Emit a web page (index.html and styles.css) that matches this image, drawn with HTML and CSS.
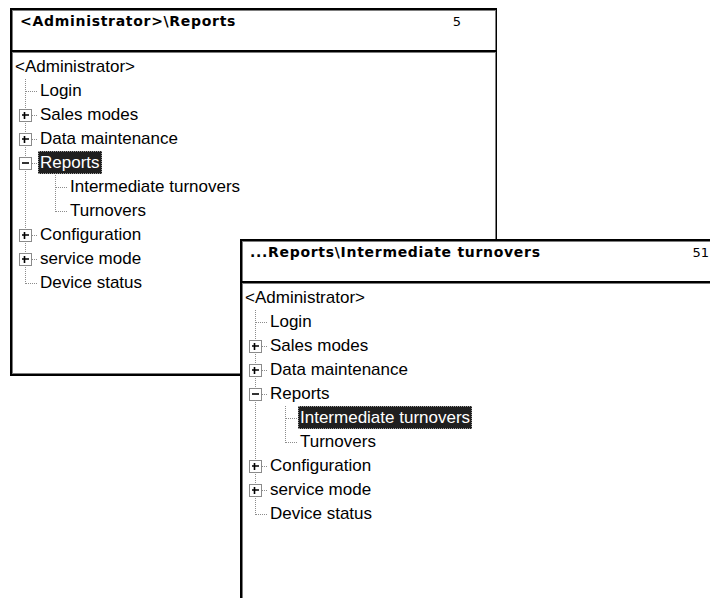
FILE: index.html
```html
<!DOCTYPE html>
<html>
<head>
  <title>Menu tree</title>
  <meta name="viewport" content="width=device-width, initial-scale=1.0">
  <link rel="stylesheet" href="styles.css">
</head>
<body>
  <div class="desktop">

    <!-- back window: Reports selected -->
    <div class="window window-back">
      <div class="title-bar">
        <span class="title">&lt;Administrator&gt;\Reports</span>
        <span class="count">5</span>
      </div>
      <div class="tree">
        <div class="row"><span class="label">&lt;Administrator&gt;</span></div>
        <div class="row"><span class="branch"></span><span class="label">Login</span></div>
        <div class="row">
          <span class="branch"><svg class="toggle" width="13" height="13" viewBox="0 0 13 13"><rect x="0.5" y="0.5" width="12" height="12" fill="#fff" stroke="#8a8a8a"/><path d="M3 6h7M5.5 3v7" stroke="#000" stroke-width="1.6" fill="none"/></svg></span>
          <span class="label">Sales modes</span>
        </div>
        <div class="row">
          <span class="branch"><svg class="toggle" width="13" height="13" viewBox="0 0 13 13"><rect x="0.5" y="0.5" width="12" height="12" fill="#fff" stroke="#8a8a8a"/><path d="M3 6h7M5.5 3v7" stroke="#000" stroke-width="1.6" fill="none"/></svg></span>
          <span class="label">Data maintenance</span>
        </div>
        <div class="row">
          <span class="branch"><svg class="toggle" width="13" height="13" viewBox="0 0 13 13"><rect x="0.5" y="0.5" width="12" height="12" fill="#fff" stroke="#8a8a8a"/><path d="M3 6h7" stroke="#000" stroke-width="1.6" fill="none"/></svg></span>
          <span class="label selected">Reports</span>
        </div>
        <div class="row"><span class="indent"></span><span class="branch"></span><span class="label">Intermediate turnovers</span></div>
        <div class="row"><span class="indent"></span><span class="branch branch-last"></span><span class="label">Turnovers</span></div>
        <div class="row">
          <span class="branch"><svg class="toggle" width="13" height="13" viewBox="0 0 13 13"><rect x="0.5" y="0.5" width="12" height="12" fill="#fff" stroke="#8a8a8a"/><path d="M3 6h7M5.5 3v7" stroke="#000" stroke-width="1.6" fill="none"/></svg></span>
          <span class="label">Configuration</span>
        </div>
        <div class="row">
          <span class="branch"><svg class="toggle" width="13" height="13" viewBox="0 0 13 13"><rect x="0.5" y="0.5" width="12" height="12" fill="#fff" stroke="#8a8a8a"/><path d="M3 6h7M5.5 3v7" stroke="#000" stroke-width="1.6" fill="none"/></svg></span>
          <span class="label">service mode</span>
        </div>
        <div class="row"><span class="branch branch-last"></span><span class="label">Device status</span></div>
      </div>
    </div>

    <!-- front window: Intermediate turnovers selected -->
    <div class="window window-front">
      <div class="title-bar">
        <span class="title">...Reports\Intermediate turnovers</span>
        <span class="count">51</span>
      </div>
      <div class="tree">
        <div class="row"><span class="label">&lt;Administrator&gt;</span></div>
        <div class="row"><span class="branch"></span><span class="label">Login</span></div>
        <div class="row">
          <span class="branch"><svg class="toggle" width="13" height="13" viewBox="0 0 13 13"><rect x="0.5" y="0.5" width="12" height="12" fill="#fff" stroke="#8a8a8a"/><path d="M3 6h7M5.5 3v7" stroke="#000" stroke-width="1.6" fill="none"/></svg></span>
          <span class="label">Sales modes</span>
        </div>
        <div class="row">
          <span class="branch"><svg class="toggle" width="13" height="13" viewBox="0 0 13 13"><rect x="0.5" y="0.5" width="12" height="12" fill="#fff" stroke="#8a8a8a"/><path d="M3 6h7M5.5 3v7" stroke="#000" stroke-width="1.6" fill="none"/></svg></span>
          <span class="label">Data maintenance</span>
        </div>
        <div class="row">
          <span class="branch"><svg class="toggle" width="13" height="13" viewBox="0 0 13 13"><rect x="0.5" y="0.5" width="12" height="12" fill="#fff" stroke="#8a8a8a"/><path d="M3 6h7" stroke="#000" stroke-width="1.6" fill="none"/></svg></span>
          <span class="label">Reports</span>
        </div>
        <div class="row"><span class="indent"></span><span class="branch"></span><span class="label selected">Intermediate turnovers</span></div>
        <div class="row"><span class="indent"></span><span class="branch branch-last"></span><span class="label">Turnovers</span></div>
        <div class="row">
          <span class="branch"><svg class="toggle" width="13" height="13" viewBox="0 0 13 13"><rect x="0.5" y="0.5" width="12" height="12" fill="#fff" stroke="#8a8a8a"/><path d="M3 6h7M5.5 3v7" stroke="#000" stroke-width="1.6" fill="none"/></svg></span>
          <span class="label">Configuration</span>
        </div>
        <div class="row">
          <span class="branch"><svg class="toggle" width="13" height="13" viewBox="0 0 13 13"><rect x="0.5" y="0.5" width="12" height="12" fill="#fff" stroke="#8a8a8a"/><path d="M3 6h7M5.5 3v7" stroke="#000" stroke-width="1.6" fill="none"/></svg></span>
          <span class="label">service mode</span>
        </div>
        <div class="row"><span class="branch branch-last"></span><span class="label">Device status</span></div>
      </div>
    </div>

  </div>
</body>
</html>
```

FILE: styles.css
```css
body {
  margin: 0;
  background: #fff;
  font-family: "Liberation Sans", Arial, sans-serif;
  color: #000;
  overflow: hidden;
}

.desktop {
  position: relative;
  width: 710px;
  height: 598px;
  overflow: hidden;
}

/* windows sit on a free canvas */
.window {
  position: absolute;
  width: 487px;
  height: 368px;
  box-sizing: border-box;
  background: #fff;
  border: 2px solid #000;
  border-right-width: 1px;
  box-shadow: inset 1px 1px 0 #7d7d7d, inset -1px -1px 0 #7d7d7d;
  overflow: hidden;
}

.window-back {
  left: 10px;
  top: 8px;
}

.window-front {
  left: 240px;
  top: 239px;
}

.title-bar {
  display: flex;
  align-items: baseline;
  height: 42px;
  box-sizing: border-box;
  padding: 2px 0 0 8px;
  border-bottom: 2px solid #000;
}

.title {
  font-family: "DejaVu Sans", sans-serif;
  font-weight: bold;
  font-size: 14px;
  line-height: 18px;
  letter-spacing: 0.7px;
  white-space: nowrap;
}

.count {
  margin-left: auto;
  margin-right: 35px;
  font-family: "DejaVu Sans", sans-serif;
  font-size: 13px;
}

.window-front .count {
  margin-right: 17px;
}

.tree {
  border-top: 1px solid #7d7d7d;
  padding: 2px 0 0 1px;
  font-size: 17px;
}

.row {
  display: flex;
  height: 24px;
}

.label {
  height: 23px;
  line-height: 23px;
  padding: 0 2px;
  white-space: nowrap;
}

.label.selected {
  background: #1f1f1f;
  color: #fff;
  outline: 1px dotted #9a9a9a;
  outline-offset: -1px;
}

/* dotted tree lines */
.branch {
  flex: none;
  width: 25px;
  display: flex;
  align-items: flex-start;
  background-image:
    repeating-linear-gradient(to bottom, #8c8c8c 0 1px, transparent 1px 2px),
    repeating-linear-gradient(to right, #8c8c8c 0 1px, transparent 1px 2px);
  background-size: 1px 100%, 12px 1px;
  background-position: 12px 0, 13px 12px;
  background-repeat: no-repeat;
}

.branch-last {
  background-size: 1px 13px, 12px 1px;
}

.indent {
  flex: none;
  width: 30px;
  background-image: repeating-linear-gradient(to bottom, #8c8c8c 0 1px, transparent 1px 2px);
  background-size: 1px 100%;
  background-position: 12px 0;
  background-repeat: no-repeat;
}

.toggle {
  display: block;
  margin: 6px 0 0 6px;
}
```
